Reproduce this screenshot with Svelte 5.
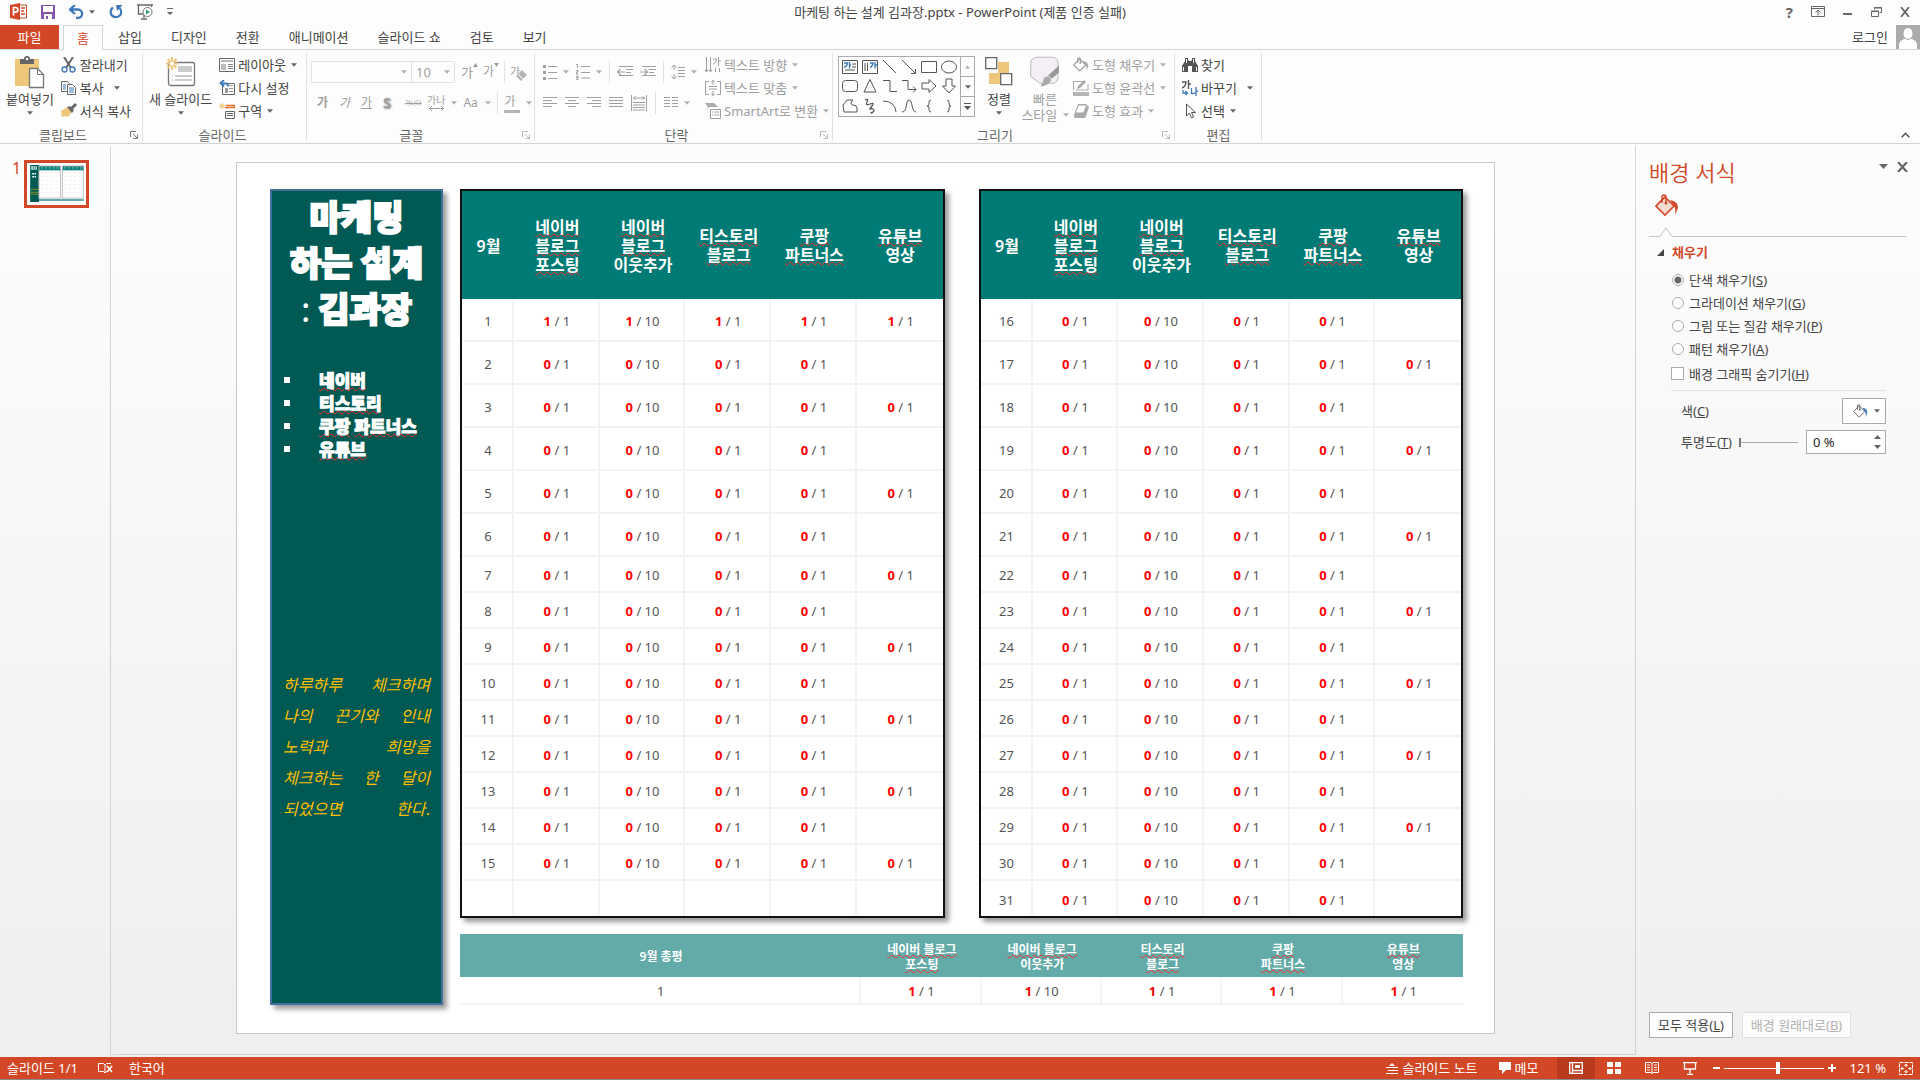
<script>
  const tabs = ['삽입', '디자인', '전환', '애니메이션', '슬라이드 쇼', '검토', '보기'];

  const columns = [
    [['네이버', true], ['블로그', true], ['포스팅', true]],
    [['네이버', true], ['블로그', true], ['이웃추가', false]],
    [['티스토리', true], ['블로그', true]],
    [['쿠팡', true], ['파트너스', true]],
    [['유튜브', true], ['영상', false]]
  ];

  const summaryColumns = [
    [['네이버 블로그', true], ['포스팅', true]],
    [['네이버 블로그', true], ['이웃추가', false]],
    [['티스토리', true], ['블로그', true]],
    [['쿠팡', true], ['파트너스', true]],
    [['유튜브', true], ['영상', false]]
  ];

  const goals = [1, 10, 1, 1, 1];

  // The video goal applies on odd days only, up to the 29th.
  function makeRow(day) {
    const done = day === 1 ? 1 : 0;
    const video = day % 2 === 1 && day < 31;
    return { day, cells: goals.map((goal, i) => (i < 4 || video ? { done, goal } : null)) };
  }

  const firstHalf = [...Array.from({ length: 15 }, (_, i) => makeRow(i + 1)), { day: '', cells: goals.map(() => null) }];
  const secondHalf = Array.from({ length: 16 }, (_, i) => makeRow(i + 16));

  const quote = ['하루하루 체크하며', '나의 끈기와 인내', '노력과 희망을', '체크하는 한 달이', '되었으면 한다.'];

  const fills = [
    ['단색 채우기', 'S'],
    ['그라데이션 채우기', 'G'],
    ['그림 또는 질감 채우기', 'P'],
    ['패턴 채우기', 'A']
  ];
  let fill = $state('S');
</script>

{#snippet arrow()}
  <svg class="arrow" width="7" height="4" viewBox="0 0 7 4" aria-hidden="true"><path d="M0 0h7L3.5 4z" fill="currentColor" /></svg>
{/snippet}

{#snippet launcher()}
  <button class="launcher" aria-label="대화 상자 표시">
    <svg width="8" height="8" viewBox="0 0 8 8"><path d="M.5 6V.5H6M3 3l4 4M7.5 3.5v4h-4" fill="none" stroke="currentColor" /></svg>
  </button>
{/snippet}

{#snippet heading(lines)}
  {#each lines as [text, marked], i}{#if i > 0}<br />{/if}<span class:spell={marked}>{text}</span>{/each}
{/snippet}

{#snippet calendar(rows)}
  <div class="frame">
    <table class="calendar">
      <thead>
        <tr>
          <th class="day" scope="col">9월</th>
          {#each columns as lines}<th scope="col">{@render heading(lines)}</th>{/each}
        </tr>
      </thead>
      <tbody>
        {#each rows as row, i}
          <tr class:tall={i < 6}>
            <td>{row.day}</td>
            {#each row.cells as cell}
              <td>{#if cell}<b>{cell.done}</b> / {cell.goal}{/if}</td>
            {/each}
          </tr>
        {/each}
      </tbody>
    </table>
  </div>
{/snippet}

{#snippet bucket(c, size)}
  <svg width={size} height={size} viewBox="0 0 24 24" fill="none">
    <path d="M10 3 19 12 10 21 1 12z" fill={c.fill} stroke={c.line} stroke-width="1.6" />
    <path d="M7 9V3q0-2 2-2t2 2v6" stroke={c.line} stroke-width="1.5" /><circle cx="11" cy="9" r="1.5" fill={c.line} />
    <path d="M15 6q8 1 8 8l-3 7q1-7-1-9z" fill={c.drop} />
  </svg>
{/snippet}

{#snippet lines(widths, align)}
  <svg width="14" height="12" viewBox="0 0 14 12">
    {#each widths as w, i}
      <rect x={align === 'c' ? (14 - w) / 2 : align === 'r' ? 14 - w : 0} y={i * 3} width={w} height="1" fill="currentColor" />
    {/each}
  </svg>
{/snippet}

<div class="app">
  <header class="titlebar">
    <div class="quick">
      <svg width="17" height="17" viewBox="0 0 17 17"><path d="M9 2h7.500v13H9z" fill="#fff" stroke="#d24726" /><path d="M11 5h4M11 11h4M11 8h3" stroke="#d24726" stroke-width="1.300" /><path d="M0 2 10 0v17L0 15z" fill="#d24726" /><path d="M3.500 12.500v-8h2a2.200 2.200 0 0 1 0 4.700h-2" fill="none" stroke="#fff" stroke-width="1.700" /></svg>
      <button aria-label="저장"><svg width="14" height="14" viewBox="0 0 14 14"><path d="M0 0h14v14H0z" fill="#8654a8" /><path d="M2 1h10v6H2zM3 9h8v5H3z" fill="#fff" /><path d="M5 11h2v3H5z" fill="#8654a8" /></svg></button>
      <button class="undo" aria-label="실행 취소"><svg width="15" height="14" viewBox="0 0 15 14"><path d="M6 0 1 4.500 6 9M1.500 4.500H9a4 4 0 0 1 0 8.300H7" fill="none" stroke="#3d78b8" stroke-width="2.300" /></svg>{@render arrow()}</button>
      <button aria-label="다시 실행"><svg width="14" height="14" viewBox="0 0 14 14"><path d="M4 2.500a5.300 5.300 0 1 0 6.500.5" fill="none" stroke="#3d78b8" stroke-width="2.200" /><path d="M7 0h6.500L8 6z" fill="#3d78b8" /></svg></button>
      <button aria-label="처음부터 시작"><svg width="16" height="16" viewBox="0 0 16 16"><path d="M0 1h16M1.500 1v9H6M7 10v4M4 15h6M14.500 1v2" fill="none" stroke="#666" stroke-width="1.300" /><circle cx="10.500" cy="8" r="4.500" fill="#fff" stroke="#777" /><path d="M9 5.500 13 8l-4 2.500z" fill="#2f9d72" /></svg></button>
      <button aria-label="빠른 실행 도구 모음 사용자 지정"><svg width="6" height="8" viewBox="0 0 6 8"><path d="M0 0h6v1H0zM0 4h6L3 7z" fill="#666" /></svg></button>
    </div>
    <h1>마케팅 하는 설계 김과장.pptx - PowerPoint (제품 인증 실패)</h1>
    <div class="window-buttons">
      <button class="help" aria-label="도움말">?</button>
      <button aria-label="리본 메뉴 표시 옵션"><svg width="14" height="11" viewBox="0 0 14 11"><path d="M.5.500h13v10H.5zM.5 2.500h13M7 9.500v-5M4.500 6.500 7 4l2.500 2.500" fill="none" stroke="#666" /></svg></button>
      <button aria-label="최소화"><svg width="10" height="11" viewBox="0 0 10 11"><path d="M0 7h9v2H0z" fill="#666" /></svg></button>
      <button aria-label="이전 크기로 복원"><svg width="11" height="10" viewBox="0 0 11 10"><path d="M3.500 2.500v-2h7v5h-2M3 1h8M.5 4.500h7v5h-7zM0 4h8" fill="none" stroke="#666" /></svg></button>
      <button aria-label="닫기"><svg width="10" height="10" viewBox="0 0 10 10"><path d="m1 0 8 10M9 0 1 10" stroke="#666" stroke-width="1.800" /></svg></button>
    </div>
  </header>

  <nav class="tabs">
    <button class="file">파일</button>
    <button class="active">홈</button>
    {#each tabs as tab}<button>{tab}</button>{/each}
    <a class="login" href="#login">로그인</a>
    <svg class="avatar" width="24" height="24" viewBox="0 0 24 24"><path d="M0 0h24v24H0z" fill="#ababab" /><path d="M3 24v-4q0-4 5-6h8q5 2 5 6v4z" fill="#fff" /><ellipse cx="12" cy="8.500" rx="5" ry="6" fill="#fff" stroke="#ababab" /></svg>
  </nav>

  <section class="ribbon" aria-label="홈">
    <div class="group clipboard">
      <div class="body">
        <button class="large">
          <svg width="29" height="32" viewBox="0 0 29 32"><path d="M0 3h24v27H0z" fill="#eec77b" /><path d="M5 3h4q0-3 3-3t3 3h4v5H5z" fill="#666" /><circle cx="12" cy="3" r="1.300" fill="#fff" /><path d="M14.500 12.500h8l6 6v13h-14z" fill="#fff" stroke="#777" stroke-width="1.300" /><path d="M22.500 12.500v6h6" fill="none" stroke="#777" /></svg>
          <span>붙여넣기</span>{@render arrow()}
        </button>
        <div class="stack">
          <button><svg width="16" height="16" viewBox="0 0 16 16"><path d="m3 0 7 11M12 0 5 11" stroke="#666" stroke-width="2" /><circle cx="3.500" cy="12.500" r="2.500" fill="none" stroke="#3d78b8" stroke-width="1.300" /><circle cx="11.500" cy="12.500" r="2.500" fill="none" stroke="#3d78b8" stroke-width="1.300" /></svg>잘라내기</button>
          <button class="wide-arrow"><svg width="16" height="16" viewBox="0 0 16 16"><path d="M.5 1.500h6l2 2v8h-8z" fill="#fff" stroke="#666" /><path d="M6.500 4.500h5l3 3v7h-8z" fill="#fff" stroke="#666" /><path d="M2 5h3M2 7h3M2 9h3M8 8h5M8 10h5M8 12h5" stroke="#3d78b8" /></svg>복사{@render arrow()}</button>
          <button><svg width="16" height="16" viewBox="0 0 16 16"><path d="M0 8 6 4l5 5-4 5-3-1-3 1z" fill="#eec77b" /><path d="m6 4 3-1 1 1 4-4 2 2-4 4 1 1-2 3z" fill="#666" /></svg>서식 복사</button>
        </div>
      </div>
      <div class="label"><span>클립보드</span>{@render launcher()}</div>
    </div>

    <div class="group slides">
      <div class="body">
        <button class="large">
          <svg width="30" height="30" viewBox="0 0 30 30"><rect x="2.500" y="5.500" width="26" height="23" rx="2" fill="#fff" stroke="#777" stroke-width="1.300" /><path d="M12 9h14v6H12z" fill="#ccc" /><path d="M6 19h1M9 19h17M6 23h1M9 23h17" stroke="#999" /><path d="M6 0v13M0 6.500h12M1.500 2l9 9M10.500 2l-9 9" stroke="#eec77b" stroke-width="2" /><circle cx="6" cy="6.500" r="2" fill="#fff" /></svg>
          <span>새 슬라이드</span>{@render arrow()}
        </button>
        <div class="stack">
          <button><svg width="16" height="14" viewBox="0 0 16 14"><path d="M.5.500h15v13H.5z" fill="#fff" stroke="#666" /><path d="M2 2h12v2H2zM2 6h5v6H2z" fill="#bbb" /><path d="M9 6.500h5M9 8.500h5M9 10.500h5" stroke="#888" /></svg>레이아웃{@render arrow()}</button>
          <button><svg width="16" height="15" viewBox="0 0 16 15"><path d="M3.500 3.500h12v11h-12z" fill="#fff" stroke="#666" /><path d="M8 5h6v1H8zM6 8h3v5H6zM10 8h4v1h-4zM10 11h4v1h-4z" fill="#999" /><path d="M5 0 1.500 3 5 6.500M2 3.500h5q2 0 2 3" fill="none" stroke="#3d78b8" stroke-width="1.800" /></svg>다시 설정</button>
          <button><svg width="16" height="16" viewBox="0 0 16 16"><path d="M6 4.500h9.500v-2H7" fill="none" stroke="#e8762d" stroke-width="1.300" /><path d="M6.500 8.500h9v7h-9zM8 10.500h6M8 12.500h6" fill="none" stroke="#666" /><path d="M3 0v6M0 3h6M1 1l4 4M5 1 1 5" stroke="#eec77b" /></svg>구역{@render arrow()}</button>
        </div>
      </div>
      <div class="label"><span>슬라이드</span></div>
    </div>

    <div class="group font disabled">
      <div class="body rows">
        <div class="row">
          <button class="combo family" aria-label="글꼴">{@render arrow()}</button><button class="combo size" aria-label="글꼴 크기">10{@render arrow()}</button>
          <button class="grow" aria-label="글꼴 크기 크게">가<svg width="5" height="4" viewBox="0 0 5 4"><path d="M0 4h5L2.500 0z" fill="currentColor" /></svg></button>
          <button class="shrink" aria-label="글꼴 크기 작게">가<svg width="5" height="4" viewBox="0 0 5 4"><path d="M0 0h5L2.500 4z" fill="currentColor" /></svg></button>
          <i class="rule"></i>
          <button class="clear" aria-label="서식 지우기">가<svg width="11" height="11" viewBox="0 0 11 11"><path d="m0 6 6-6 5 5-6 6z" fill="#b5b5b5" /><path d="m2 4 5 5" stroke="#fff" /></svg></button>
        </div>
        <div class="row second">
          <button><b>가</b></button><button><em>가</em></button><button><u>가</u></button><button class="shadow"><b>S</b></button><button class="tiny"><s>가나다</s></button>
          <button class="spacing">가나<svg width="15" height="5" viewBox="0 0 15 5"><path d="M0 2.500h15M3 0 .5 2.500 3 5M12 0l2.500 2.500L12 5" fill="none" stroke="currentColor" /></svg></button>{@render arrow()}
          <button>Aa</button>{@render arrow()}
          <i class="rule"></i>
          <button class="ink">가</button>{@render arrow()}
        </div>
      </div>
      <div class="label"><span>글꼴</span>{@render launcher()}</div>
    </div>

    <div class="group paragraph disabled">
      <div class="body">
        <div class="rows">
          <div class="row">
            <button class="dropped" aria-label="글머리 기호"><svg width="14" height="15" viewBox="0 0 14 15"><path d="M0 0h3v3H0zM0 6h3v3H0zM0 12h3v3H0zM5 1h9v1H5zM5 7h9v1H5zM5 13h9v1H5z" fill="currentColor" /></svg>{@render arrow()}</button>
            <button class="dropped" aria-label="번호 매기기"><svg width="14" height="16" viewBox="0 0 14 16"><path d="M0 .500h1.500V4M0 6.500h2v1.500H0.500v2H2.500M0 12h2v3.500H0M0 13.500h2M5 2.500h9M5 8.500h9M5 14h9" fill="none" stroke="currentColor" /></svg>{@render arrow()}</button>
            <i class="rule"></i>
            <button aria-label="목록 수준 줄임"><svg width="16" height="12" viewBox="0 0 16 12"><path d="M2 .500h14M9 3.500h7M9 6.500h5M2 9.500h14M0 6h8M3.500 3 .500 6l3 3" fill="none" stroke="currentColor" stroke-width="1.200" /></svg></button>
            <button aria-label="목록 수준 늘림"><svg width="16" height="12" viewBox="0 0 16 12"><path d="M2 .500h14M9 3.500h7M9 6.500h5M2 9.500h14M0 6h7M4.500 3l3 3-3 3" fill="none" stroke="currentColor" stroke-width="1.200" /></svg></button>
            <i class="rule"></i>
            <button class="dropped" aria-label="줄 간격"><svg width="14" height="16" viewBox="0 0 14 16"><path d="M3 1v5M3 10v5M.500 3.500 3 1l2.500 2.500M.500 12.500 3 15l2.500-2.500M7 3.500h7M7 6.500h7M7 9.500h7M7 12.500h7" fill="none" stroke="currentColor" /></svg>{@render arrow()}</button>
          </div>
          <div class="row second">
            <button aria-label="왼쪽 맞춤">{@render lines([14, 9, 14, 9], 'l')}</button>
            <button aria-label="가운데 맞춤">{@render lines([14, 8, 14, 8], 'c')}</button>
            <button aria-label="오른쪽 맞춤">{@render lines([14, 9, 14, 9], 'r')}</button>
            <button aria-label="양쪽 맞춤">{@render lines([14, 14, 14, 14], 'l')}</button>
            <button aria-label="균등 분할"><svg width="16" height="16" viewBox="0 0 16 16"><path d="M.5 0v16M15.500 0v16M2 3h12M4.500 1 2.500 3l2 2M11.500 1l2 2-2 2M2 7.500h12M2 10h12M2 12.500h12M2 15h12" fill="none" stroke="currentColor" /></svg></button>
            <i class="rule"></i>
            <button class="dropped" aria-label="열 추가"><svg width="14" height="12" viewBox="0 0 14 12"><path d="M0 .500h6M8 .500h6M0 3.500h6M8 3.500h6M0 6.500h6M8 6.500h6M0 9.500h6M8 9.500h6" stroke="currentColor" /></svg>{@render arrow()}</button>
          </div>
        </div>
        <div class="stack">
          <button><svg width="16" height="16" viewBox="0 0 16 16"><path d="M1.500 0v14M5.500 0v14M0 12.500 1.500 15 3 12.500M4 12.500 5.500 15 7 12.500M8 2h3.500q0 4-3.500 5M13.500 0v9M13.500 4H16M10.500 11v4M14.500 11v4" fill="none" stroke="currentColor" /></svg>텍스트 방향{@render arrow()}</button>
          <button><svg width="16" height="16" viewBox="0 0 16 16"><path d="M4 1.500H.5v13H4M12 1.500h3.500v13H12" fill="none" stroke="currentColor" /><path d="M8 0v5M6 2.500 8 .500l2 2M8 11v5M6 13.500l2 2 2-2M4 6.500h8M4 9h8" fill="none" stroke="currentColor" /></svg>텍스트 맞춤{@render arrow()}</button>
          <button><svg width="16" height="16" viewBox="0 0 16 16"><path d="M0 0h9l4 4H4L0 8l3-4z" fill="#aaa" /><path d="M5.500 6.500h10v9h-10z" fill="#fff" stroke="currentColor" /><path d="M7 9h1M9 9h5M7 12h1M9 12h5" stroke="currentColor" /></svg>SmartArt로 변환{@render arrow()}</button>
        </div>
      </div>
      <div class="label"><span>단락</span>{@render launcher()}</div>
    </div>

    <div class="group drawing">
      <div class="body">
        <div class="gallery">
          <div class="shapes">
            <svg viewBox="0 0 16 16"><path d="M.5 1.500h15v13H.5zM10 5h4M10 8h4M3 11h10" fill="none" stroke="#555" /><path d="M2 4h3.500q0 3-3.500 4.500M7.500 3v6.500M7.500 6H9" fill="none" stroke="#3d78b8" stroke-width="1.300" /></svg>
            <svg viewBox="0 0 16 16"><path d="M.5 1.500h15v13H.5zM3 4v8M5.500 4v8" fill="none" stroke="#555" /><path d="M8 4h3q0 3-3 4.500M13 3v6.500M13 6h2" fill="none" stroke="#3d78b8" stroke-width="1.300" /></svg>
            <svg viewBox="0 0 16 16"><path d="m1 1 13 13" stroke="#555" /></svg>
            <svg viewBox="0 0 16 16"><path d="m1 1 13 13M14.500 10v4.500H10" fill="none" stroke="#555" /></svg>
            <svg viewBox="0 0 16 16"><path d="M.5 2.500h15v11H.5z" fill="none" stroke="#555" /></svg>
            <svg viewBox="0 0 16 16"><ellipse cx="8" cy="8" rx="7.500" ry="6" fill="none" stroke="#555" /></svg>
            <svg viewBox="0 0 16 16"><rect x=".5" y="2.500" width="15" height="11" rx="3" fill="none" stroke="#555" /></svg>
            <svg viewBox="0 0 16 16"><path d="M8 1.500 14 14H2z" fill="none" stroke="#555" /></svg>
            <svg viewBox="0 0 16 16"><path d="M1 2.500h7v11h7" fill="none" stroke="#555" /></svg>
            <svg viewBox="0 0 16 16"><path d="M1 2.500h6v9h8M12 8.500l3 3-3 3" fill="none" stroke="#555" /></svg>
            <svg viewBox="0 0 16 16"><path d="M1 5h7V1.500L15 8l-7 6.500V11H1z" fill="none" stroke="#555" /></svg>
            <svg viewBox="0 0 16 16"><path d="M5 1v7H1.500L8 15l6.500-7H11V1z" fill="none" stroke="#555" /></svg>
            <svg viewBox="0 0 16 16"><path d="M2 14 1 7l4-5h6q-4 4 0 5 4 0 4 3v4z" fill="none" stroke="#555" /></svg>
            <svg viewBox="0 0 16 16"><path d="M3 2q4-2 2 2T8 6t2 2-2 3 3 0 0 3-2 0" fill="none" stroke="#555" stroke-width="1.300" /></svg>
            <svg viewBox="0 0 16 16"><path d="M1 3q12 0 13 11" fill="none" stroke="#555" /></svg>
            <svg viewBox="0 0 16 16"><path d="M1 14c6 0 3-12 7-12s2 12 7 12" fill="none" stroke="#555" /></svg>
            <svg viewBox="0 0 16 16"><path d="M10 2Q8 2 8 4v2q0 2-2 2 2 0 2 2v2q0 2 2 2" fill="none" stroke="#555" /></svg>
            <svg viewBox="0 0 16 16"><path d="M6 2q2 0 2 2v2q0 2 2 2-2 0-2 2v2q0 2-2 2" fill="none" stroke="#555" /></svg>
          </div>
          <div class="scroll">
            <button class="off" aria-label="위로"><svg width="5" height="4" viewBox="0 0 7 4"><path d="M0 4h7L3.500 0z" fill="#aaa" /></svg></button>
            <button aria-label="아래로">{@render arrow()}</button>
            <button aria-label="자세히"><svg width="7" height="7" viewBox="0 0 7 7"><path d="M0 0h7v1H0zM0 3h7L3.500 7z" fill="#555" /></svg></button>
          </div>
        </div>
        <button class="large arrange">
          <svg width="28" height="30" viewBox="0 0 28 30"><path d="M13 5h11v11H13zM4 16h11v11H4z" fill="#eec77b" /><path d="M.7.700h11v11h-11zM15.700 16.700h11v11h-11z" fill="#fff" stroke="#666" stroke-width="1.300" /></svg>
          <span>정렬</span>{@render arrow()}
        </button>
        <button class="large style dim">
          <svg width="30" height="31" viewBox="0 0 30 31"><path d="M8 .700h14q6 0 6 6v14q0 6-6 6H10L.700 20V7q0-6 7-6.300z" fill="#f3eff4" stroke="#bbb" /><path d="M29 9v7l-7 6-4-3z" fill="#999" /><path d="M17 20q4 0 4 4-2 5-10 6-1-1 2-4 0-6 4-6z" fill="#aaa" /></svg>
          <span>빠른<br />스타일 {@render arrow()}</span>
        </button>
        <div class="stack dim">
          <button>{@render bucket({ fill: '#fff', line: '#999', drop: '#aaa' }, 16)}도형 채우기{@render arrow()}</button>
          <button><svg width="16" height="16" viewBox="0 0 16 16"><path d="M.5 10V1.500h11M15 4v6H3" fill="none" stroke="#aaa" /><path d="m4 9 1-3 6-6 2 2-6 6z" fill="#aaa" /><path d="M0 12h16v4H0z" fill="#b5b5b5" /></svg>도형 윤곽선{@render arrow()}</button>
          <button><svg width="16" height="16" viewBox="0 0 16 16"><path d="M5 1h8l3 3-3 9q0 2-2 2H3q-3 0-2-3z" fill="#aaa" /><path d="M6 2h6q2 0 1 2l-2 5q0 1-2 1H4q-2 0-1-2l2-5q0-1 1-1z" fill="#fff" stroke="#aaa" /></svg>도형 효과{@render arrow()}</button>
        </div>
      </div>
      <div class="label"><span>그리기</span>{@render launcher()}</div>
    </div>

    <div class="group editing">
      <div class="body">
        <div class="stack">
          <button><svg width="16" height="14" viewBox="0 0 16 14"><path d="M3 0h3v2l1 1h2l1-1V0h3v3l3 5v6h-6V8H6v6H0V8l3-5z" fill="#555" /><path d="M1.500 9v4M14.500 9v4M4.500 1v4M11.500 1v4" stroke="#fff" /></svg>찾기</button>
          <button class="wide-arrow"><svg width="16" height="16" viewBox="0 0 16 16"><path d="M0 2h4q0 4-4 6M6.500 0v9M6.500 4H9" fill="none" stroke="#555" stroke-width="1.400" /><path d="M9.500 8v5.500q3 0 4-.5M14 7v9M14 11h2M1 10v3h4M3.500 11l2 2-2 2" fill="none" stroke="#3d78b8" stroke-width="1.300" /></svg>바꾸기{@render arrow()}</button>
          <button><svg width="16" height="16" viewBox="0 0 16 16"><path d="M4.500 1v12l3-3 2 5 2-1-2-4.500h4z" fill="#fff" stroke="#555" /></svg>선택{@render arrow()}</button>
        </div>
      </div>
      <div class="label"><span>편집</span></div>
    </div>
    <button class="collapse" aria-label="리본 메뉴 축소"><svg width="9" height="6" viewBox="0 0 9 6"><path d="m.7 5.300 3.800-4 3.800 4" fill="none" stroke="#555" stroke-width="1.600" /></svg></button>
  </section>

  <div class="workspace">
    <aside class="thumbs">
      <span>1</span>
      <button aria-label="슬라이드 1">
        <svg viewBox="0 0 56 39" width="55" height="38"><path d="M0 0h56v39H0z" fill="#fff" /><path d="M1 0h9v38H1z" fill="#005953" /><path d="M10 1h22v4H10zM34 1h22v4H34z" fill="#007a74" /><path d="M10 1h22v33H10zM34 1h22v33H34z" fill="none" stroke="#bbb" /><path d="M10 5h22M34 5h22" stroke="#007a74" /><path d="M12 3h19M36 3h19" stroke="#9cc" stroke-dasharray="2 2" /><path d="M12 8h19M12 12h19M12 16h19M12 20h19M12 24h19M12 28h19M36 8h19M36 12h19M36 16h19M36 20h19M36 24h19M36 28h19" stroke="#f3e6e6" stroke-dasharray="2 3" /><path d="M10 35h46v2H10z" fill="#62aba8" /><path d="M2 2h6M2 4h6M3 9h4M3 12h4" stroke="#dff" stroke-width="1.500" stroke-dasharray="2 .5" /><path d="M2 25h7M2 28h7M2 30h7" stroke="#b3a21a" stroke-dasharray="1.500 .5" /></svg>
      </button>
    </aside>

    <main class="stage">
      <article class="slide">
        <section class="side">
          <h2>마케팅<br />하는 설계<br /><span>:</span> 김과장</h2>
          <ul>
            <li><span class="spell">네이버</span></li>
            <li><span class="spell">티스토리</span></li>
            <li><span class="spell">쿠팡</span> <span class="spell">파트너스</span></li>
            <li><span class="spell">유튜브</span></li>
          </ul>
          <div class="quote">{#each quote as line}<p>{line}</p>{/each}</div>
        </section>
        <div class="content">
          <div class="pair">
            {@render calendar(firstHalf)}
            {@render calendar(secondHalf)}
          </div>
          <table class="summary">
            <thead>
              <tr>
                <th class="review" scope="col">9월 총평</th>
                {#each summaryColumns as item}<th scope="col">{@render heading(item)}</th>{/each}
              </tr>
            </thead>
            <tbody>
              <tr>
                <td>1</td>
                {#each goals as goal}<td><b>1</b> / {goal}</td>{/each}
              </tr>
            </tbody>
          </table>
        </div>
      </article>
    </main>

    <aside class="pane">
      <div class="pane-head">
        <h2>배경 서식</h2>
        <button aria-label="작업창 옵션"><svg width="9" height="5" viewBox="0 0 9 5"><path d="M0 0h9L4.500 5z" fill="#666" /></svg></button>
        <button aria-label="닫기"><svg width="11" height="10" viewBox="0 0 11 10"><path d="m1 0 9 10M10 0 1 10" stroke="#666" stroke-width="2.200" /></svg></button>
      </div>
      <button class="fill-tab" aria-label="채우기">{@render bucket({ fill: '#f6dcd4', line: '#d24726', drop: '#d24726' }, 24)}</button>
      <div class="notch"><i></i><svg width="14" height="10" viewBox="0 0 14 10"><path d="M0 9.500h1L7 1l6 8.500h1" fill="none" stroke="#c6c6c6" /></svg><i class="long"></i></div>
      <h3><svg width="7" height="7" viewBox="0 0 7 7"><path d="M7 0v7H0z" fill="#444" /></svg>채우기</h3>
      <div class="options">
        {#each fills as [text, key]}
          <label><input type="radio" name="fill" value={key} bind:group={fill} />{text}(<u>{key}</u>)</label>
        {/each}
        <label class="check"><input type="checkbox" />배경 그래픽 숨기기(<u>H</u>)</label>
      </div>
      <div class="settings">
        <div class="setting">
          <label for="color">색(<u>C</u>)</label>
          <button id="color" class="color">{@render bucket({ fill: '#fff', line: '#666', drop: '#3d78b8' }, 15)}{@render arrow()}</button>
        </div>
        <div class="setting">
          <label for="alpha">투명도(<u>T</u>)</label>
          <input class="alpha" type="range" id="alpha" min="0" max="100" value="0" />
          <div class="spin">
            <input type="text" value="0 %" aria-label="투명도 값" />
            <svg width="7" height="14" viewBox="0 0 7 14"><path d="M0 4h7L3.500 0zM0 10h7l-3.500 4z" fill="#666" /></svg>
          </div>
        </div>
      </div>
      <div class="pane-foot">
        <button>모두 적용(<u>L</u>)</button>
        <button disabled>배경 원래대로(<u>B</u>)</button>
      </div>
    </aside>
  </div>

  <footer class="status">
    <span>슬라이드 1/1</span>
    <button class="proof" aria-label="맞춤법 검사"><svg width="15" height="13" viewBox="0 0 15 13"><path d="M7 11 5.500 9.500H.5v-8h5L7 3zM7 3l1.500-1.500H13M7 11l1.500-1.500" fill="none" stroke="#fff" /><path d="m9 4 5 6M14 4 9 10" stroke="#fff" stroke-width="1.600" /></svg></button>
    <span>한국어</span>
    <div class="status-right">
      <button class="notes"><svg width="12" height="11" viewBox="0 0 12 11"><path d="M3 3h6L6 0zM0 4h12v1H0zM2 7h10v1H2zM0 10h12v1H0z" fill="#fff" /></svg>슬라이드 노트</button>
      <button class="memo"><svg width="12" height="12" viewBox="0 0 12 12"><path d="M0 0h12v8H7l-4 4V8H0z" fill="#fff" /></svg>메모</button>
      <button class="view on" aria-label="기본"><svg width="14" height="12" viewBox="0 0 14 12"><path d="M.7.700h12.600v10.600H.7zM3.500 1v10M4 8.500h9" fill="none" stroke="#fff" stroke-width="1.300" /><path d="M6 3h5v3H6z" fill="#fff" /></svg></button>
      <button class="view" aria-label="여러 슬라이드"><svg width="14" height="12" viewBox="0 0 14 12"><path d="M0 0h6v5H0zM8 0h6v5H8zM0 7h6v5H0zM8 7h6v5H8z" fill="#fff" /></svg></button>
      <button class="view" aria-label="읽기용 보기"><svg width="14" height="13" viewBox="0 0 14 13"><path d="M7 12 6 10.500H.5V.500H6L7 2l1-1.500h5.500v10H8zM7 2v9M2 3h3M2 5.500h3M2 8h3M9 3h3M9 5.500h3M9 8h3" fill="none" stroke="#fff" /></svg></button>
      <button class="view" aria-label="슬라이드 쇼"><svg width="14" height="13" viewBox="0 0 14 13"><path d="M0 .700h14M1.500 1v6h11V1M7 7v5M4 12.300h6" fill="none" stroke="#fff" stroke-width="1.300" /></svg></button>
      <button class="zoom-button" aria-label="축소"><svg width="7" height="8" viewBox="0 0 7 8"><path d="M0 3h7v2H0z" fill="#fff" /></svg></button>
      <input class="zoom" type="range" min="10" max="200" value="114" aria-label="확대/축소" />
      <button class="zoom-button" aria-label="확대"><svg width="8" height="8" viewBox="0 0 8 8"><path d="M0 3h8v2H0zM3 0h2v8H3z" fill="#fff" /></svg></button>
      <button class="percent">121 %</button>
      <button aria-label="창에 맞춤"><svg width="14" height="13" viewBox="0 0 14 13"><path d="M.5.500h13v12H.5z" fill="none" stroke="#fff" stroke-dasharray="4 1" /><path d="M7 2v3M7 8v3M2 6.500h3M9 6.500h3" stroke="#fff" /><path d="M5.500 4 7 2l1.500 2M5.500 9 7 11l1.500-2M3.500 5 2 6.500 3.500 8M10.500 5 12 6.500 10.500 8" fill="none" stroke="#fff" /></svg></button>
    </div>
  </footer>
</div>

<style>
  :global(body) { margin: 0; }
  .app { display: flex; flex-direction: column; min-height: 100vh; box-sizing: border-box; border-bottom: 1px solid #8a8a8a; background: #fdfdfd; color: #444; font: 13px/16px "Noto Sans", "Noto Sans CJK KR", sans-serif; }
  .app :global(*) { box-sizing: border-box; }
  button { display: inline-flex; align-items: center; padding: 0; border: 0; background: none; color: inherit; font: inherit; white-space: nowrap; }
  h1, h2, h3, p, ul { margin: 0; padding: 0; font-weight: 400; }
  svg { flex: none; display: block; }
  .arrow { color: #666; width: 6px; }
  .disabled, .dim { color: #a0a0a0; }
  .disabled .arrow, .dim .arrow { color: #b0b0b0; }

  .titlebar { display: grid; grid-template-columns: 1fr auto 1fr; align-items: center; height: 25px; padding: 0 10px 2px; }
  .titlebar h1 { font-size: 13px; }
  .quick { display: flex; align-items: center; gap: 14px; }
  .undo { gap: 5px; }
  .window-buttons { display: flex; justify-content: flex-end; align-items: center; gap: 18px; }
  .help { font-weight: 700; font-size: 15px; color: #666; }

  .tabs { display: flex; height: 25px; align-items: stretch; border-bottom: 1px solid #d4d4d4; }
  .tabs button { padding: 0 14px 0 15px; }
  .tabs .file { width: 59px; justify-content: center; background: #d24726; color: #fff; padding: 0; }
  .tabs .active { width: 40px; height: 25px; margin: 0 0 0 4px; justify-content: center; padding: 0; border: 1px solid #d4d4d4; border-bottom: 0; background: #fdfdfd; color: #d24726; }
  .login { margin: 4px 8px 0 auto; color: #444; text-decoration: none; }

  .ribbon { display: flex; height: 94px; padding-top: 3px; border-bottom: 1px solid #d4d4d4; }
  .group { display: flex; flex-direction: column; flex: none; height: 88px; border-right: 1px solid #e1e1e1; }
  .body { display: flex; flex: none; height: 73px; }
  .label { display: flex; flex: none; align-items: center; height: 17px; color: #666; }
  .label span { flex: 1; padding-right: 10px; text-align: center; }
  .launcher { margin-right: 4px; color: #777; }
  .disabled .launcher, .drawing .launcher { color: #bbb; }
  .large { flex-direction: column; height: 72px; padding-top: 1px; color: #444; }
  .large > svg:first-child { height: 34px; padding-top: 2px; overflow: visible; }
  .large span { margin: 3px 0 4px; }
  .large.dim { color: #a0a0a0; }
  .stack { display: flex; flex-direction: column; }
  .stack button { height: 23px; gap: 3px; }
  .stack .arrow { margin-left: 2px; }
  .stack .wide-arrow .arrow { margin-left: 7px; }
  .clipboard { width: 143px; padding-left: 6px; }
  .clipboard .stack { margin-left: 7px; }
  .slides { width: 164px; padding-left: 6px; }
  .slides .stack { margin-left: 7px; }

  .rows { display: flex; flex-direction: column; }
  .row { display: flex; align-items: center; height: 22px; margin-top: 8px; }
  .second { margin-top: 9px; }
  .rule { flex: none; width: 1px; height: 22px; background: #e1e1e1; }
  .font { width: 228px; padding-left: 4px; }
  .combo { flex: none; justify-content: flex-end; height: 22px; padding-right: 4px; border: 1px solid #e1e1e1; }
  .family { width: 101px; }
  .size { width: 44px; margin-left: -1px; padding-left: 4px; justify-content: space-between; }
  .grow, .shrink { height: 18px; }
  .grow svg, .shrink svg { align-self: flex-start; }
  .grow { margin-left: 6px; }
  .shrink { margin-left: 5px; font-size: 12px; }
  .font .rule { margin: 0 5px; }
  .font .second { gap: 6px; font-size: 12px; padding-left: 6px; }
  .font .second .rule { margin: 0; }
  .font .second button { min-width: 16px; }
  .clear { font-size: 11px; }
  .clear svg { margin: 6px 0 0 -4px; }
  .font .shadow { text-shadow: 1px 1px 2px #888; font-size: 14px; }
  .font .second .tiny { width: 16px; font-size: 6px; }
  .font .spacing { flex-direction: column; font-size: 10px; line-height: 11px; }
  .ink { border-bottom: 3px solid #b5b5b5; }

  .paragraph { width: 298px; padding-left: 8px; }
  .paragraph .rows { width: 153px; }
  .paragraph .row { gap: 7px; }
  .paragraph .row .dropped { gap: 6px; }
  .paragraph .row.second { gap: 8px; }
  .paragraph .stack { margin-left: 9px; }

  .drawing { width: 342px; padding-left: 5px; }
  .gallery { display: flex; width: 137px; height: 61px; margin-top: 3px; border: 1px solid #ababab; }
  .shapes { display: grid; grid-template-columns: repeat(6, 1fr); flex: 1; padding: 0 1px; align-items: center; justify-items: center; }
  .shapes svg { width: 16px; height: 16px; }
  .scroll { display: flex; flex-direction: column; width: 14px; border-left: 1px solid #ababab; }
  .scroll button { flex: 1; justify-content: center; }
  .scroll button + button { border-top: 1px solid #ababab; }
  .arrange { margin-left: 10px; }
  .style { margin-left: 10px; }
  .style .arrow { display: inline-block; margin: 0 0 3px 2px; }
  .drawing .stack { margin-left: 6px; }
  .drawing .large.style { width: 44px; }
  .editing { width: 87px; padding-left: 7px; }
  .editing .label span { padding-right: 6px; }
  .collapse { margin: auto 10px 5px auto; }

  .workspace { display: flex; flex: 1; background: linear-gradient(#fdfdfd, #efefef); padding-top: 2px; }
  .thumbs { display: flex; align-items: flex-start; gap: 3px; width: 111px; padding: 14px 0 0 12px; margin-bottom: 2px; border-right: 1px solid #d4d4d4; color: #d24726; font: 16px/16px "Noto Sans", sans-serif; }
  .thumbs button { padding: 2px; border: 3px solid #d24726; background: #fff; }
  .stage { flex: 1; margin: 0 0 2px 2px; padding: 16px 140px 20px 123px; border-bottom: 1px solid #d4d4d4; }
  .slide { display: flex; gap: 17px; padding: 26px 31px 28px 33px; border: 1px solid #c6c6c6; background: #fff; }
  .side { flex: none; width: 173px; border: 2px solid #41719c; background: #005953; color: #fff; box-shadow: 4px 4px 5px #0006; }
  .side h2 { padding-top: 2px; font: 900 34px/46px "Noto Sans CJK KR", sans-serif; text-align: center; -webkit-text-stroke: 2px #fff; }
  .side h2 span { font-weight: 400; -webkit-text-stroke: 0; }
  .side ul { display: flex; flex-direction: column; margin-top: 37px; padding-left: 12px; list-style: none; font: 900 17px/23px "Noto Sans CJK KR", sans-serif; -webkit-text-stroke: 1px #fff; }
  .side li { display: flex; align-items: center; gap: 4px; white-space: nowrap; }
  .side li::before { content: ""; width: 6px; height: 6px; margin-right: 25px; background: #fff; }
  .quote { margin: 209px 11px 0; color: #ffc000; font: italic 700 16px/31px "Noto Sans CJK KR", sans-serif; }
  .quote p { text-align: justify; text-align-last: justify; }
  .spell { text-decoration: underline wavy #ff2a2a 1px; text-underline-offset: 0; text-decoration-skip-ink: none; }

  .content { flex: 1; min-width: 0; }
  .pair { display: flex; gap: 34px; }
  .frame { flex: 1; border: 2px solid #111; box-shadow: 4px 4px 5px #0006; }
  table { width: 100%; table-layout: fixed; border-spacing: 0; text-align: center; }
  th { padding: 2px 0 0 1px; }
  td { padding: 2px 0 0 2px; border: 0 solid #f3f3f3; border-width: 0 2px 2px 0; color: #555; }
  td:last-child { border-right-width: 0; }
  b { font-weight: 700; }
  td b { color: #f00; }
  .calendar th { height: 108px; background: #007a74; color: #fff; font-size: 16px; line-height: 19px; font-weight: 600; }
  .calendar .day { width: 52px; }
  .calendar td { height: 36px; }
  .calendar .tall td { height: 43px; }
  .calendar tbody tr:last-child td { height: 35px; border-bottom-width: 0; }
  .summary { margin-top: 16px; }
  .summary th { height: 43px; background: #62aba8; color: #fff; font-size: 12px; line-height: 15px; font-weight: 600; }
  .summary .review { width: 40%; }
  .summary td { height: 28px; }

  .pane { display: flex; flex-direction: column; width: 285px; margin-bottom: 2px; padding: 12px 14px 17px 13px; border-left: 1px solid #d4d4d4; }
  .pane-head { display: flex; align-items: center; gap: 13px; margin-right: -2px; }
  .pane-head h2 { flex: 1; color: #d24726; font: 350 22px/28px "Noto Sans", "Noto Sans CJK KR", sans-serif; }
  .pane-head button { margin-bottom: 11px; }
  .pane-head button:last-child { margin-left: -4px; }
  .fill-tab { align-self: flex-start; margin: 8px 0 0 6px; }
  .notch { display: flex; align-items: flex-end; margin-top: 9px; }
  .notch i { width: 10px; height: 1px; background: #c6c6c6; }
  .notch .long { flex: 1; }
  .pane h3 { display: flex; align-items: center; gap: 8px; margin: 7px 0 0 8px; color: #d24726; font-size: 13px; line-height: 17px; font-weight: 700; }
  .options { display: flex; flex-direction: column; margin: 7px 20px 0 22px; padding-bottom: 3px; border-bottom: 1px solid #e1e1e1; }
  .options label { display: flex; align-items: center; height: 23px; }
  .options .check { height: 27px; }
  .options input { appearance: none; width: 12px; height: 12px; margin: 0 5px 0 1px; border: 1px solid #ababab; border-radius: 50%; background: #fff; }
  .options input[type="radio"]:checked { background: radial-gradient(#666 0 3px, #fff 4px); }
  .options input[type="checkbox"] { width: 13px; height: 13px; margin-left: 0; border-radius: 0; }
  .settings { display: flex; flex-direction: column; gap: 6px; margin: 7px 20px 0 32px; }
  .setting { display: flex; align-items: center; justify-content: space-between; }
  .color { gap: 6px; justify-content: center; width: 44px; height: 26px; padding-left: 4px; border: 1px solid #ababab; background: #fff; }
  .alpha { appearance: none; width: 59px; height: 10px; margin: 0; background: linear-gradient(#ababab, #ababab) center / 100% 1px no-repeat; }
  .alpha::-webkit-slider-thumb { appearance: none; width: 2px; height: 9px; background: #777; }
  .spin { display: flex; align-items: center; width: 80px; height: 24px; padding: 0 4px 0 6px; border: 1px solid #ababab; background: #fff; }
  .spin input { flex: 1; width: 40px; padding: 0; border: 0; background: none; color: #222; font: inherit; }
  .pane-foot { display: flex; gap: 9px; margin-top: auto; }
  .pane-foot button { height: 26px; padding: 0 8px; border: 1px solid #ababab; background: #fdfdfd; }
  .pane-foot button:disabled { border-color: #e1e1e1; color: #b1b1b1; }

  .status { display: flex; flex: none; align-items: center; height: 22px; padding-left: 7px; background: #d24726; color: #fff; }
  .proof { margin: 0 16px 0 20px; }
  .status-right { display: flex; align-items: center; align-self: stretch; margin-left: auto; padding-right: 7px; }
  .notes { gap: 4px; margin-right: 21px; }
  .memo { gap: 4px; margin-right: 18px; }
  .view { width: 38px; height: 22px; justify-content: center; }
  .view.on { background: #b83b1d; }
  .zoom-button { margin: 0 4px; }
  .zoom { appearance: none; width: 100px; height: 14px; margin: 0; background: linear-gradient(#fff, #fff) center / 100% 1px no-repeat; }
  .zoom::-webkit-slider-thumb { appearance: none; width: 4px; height: 12px; background: #fff; }
  .percent { margin: 0 13px 0 10px; }
</style>
